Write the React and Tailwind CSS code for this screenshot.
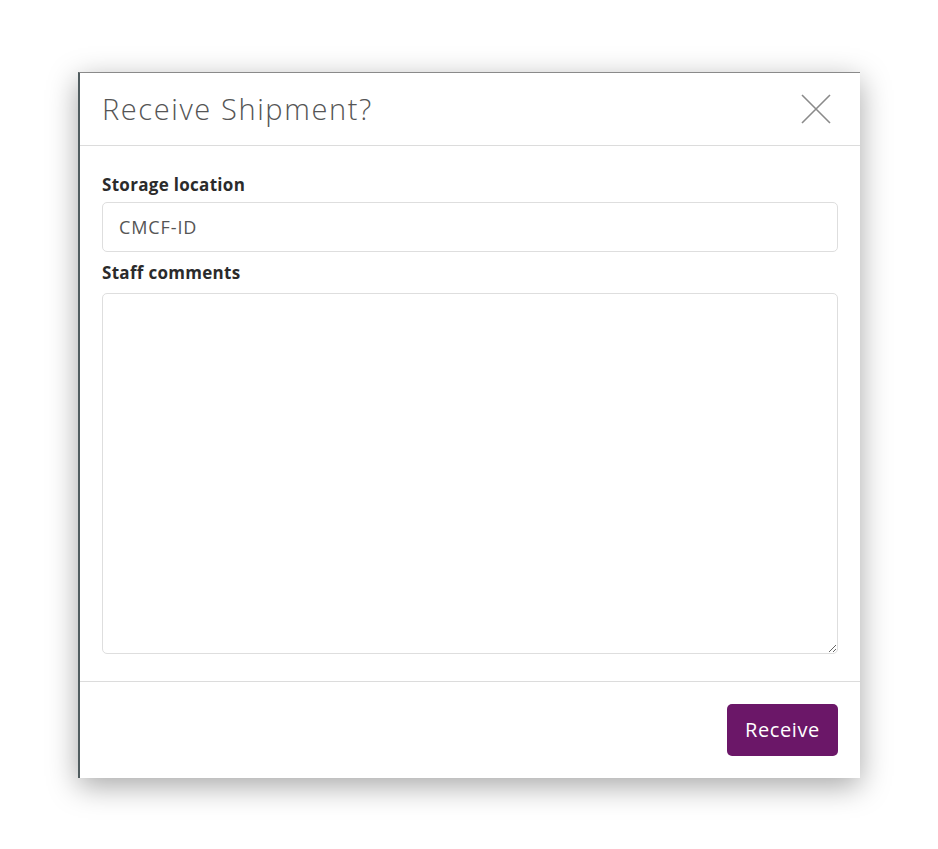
import React from "react";

const font = { fontFamily: '"Open Sans", "Noto Sans", sans-serif' };

const CloseIcon = () => (
  <svg width="32" height="32" viewBox="0 0 32 32" fill="none">
    <path d="M2 2L30 30M30 2L2 30" stroke="#8a8a8a" strokeWidth="1.6" />
  </svg>
);

const App = () => {
  return (
    <div className="bg-white min-h-screen pt-[72px] pl-[78px]" style={font}>
      <div className="w-[782px] bg-white border-l-2 border-l-[#505c5f] border-t border-t-[#8a8a8a] shadow-[0_8px_28px_rgba(0,0,0,0.35)]">
        {/* Header */}
        <div className="h-[73px] flex items-center justify-between pl-[22px] pr-[28px] border-b border-[#dcdcdc]">
          <h2 className="text-[29px] font-light text-[#555] tracking-[1.6px]">Receive Shipment?</h2>
          <button className="text-[#888]">
            <CloseIcon />
          </button>
        </div>

        {/* Body */}
        <div className="px-[22px] pt-[29px] pb-[27px]">
          <label className="block text-[17px] leading-[20px] font-bold text-[#2b2b2b] tracking-[0.3px] mb-[7px]">
            Storage location
          </label>
          <input
            defaultValue="CMCF-ID"
            className="w-full h-[50px] px-[16px] border border-[#dedede] rounded-[5px] text-[18px] tracking-[0.9px] text-[#555] outline-none"
          />
          <label className="block text-[17px] leading-[20px] font-bold text-[#2b2b2b] tracking-[0.3px] mt-[11px] mb-[10px]">
            Staff comments
          </label>
          <textarea className="block w-full h-[361px] px-[16px] py-[12px] border border-[#dedede] rounded-[5px] text-[17px] text-[#555] outline-none" />
        </div>

        {/* Footer */}
        <div className="h-[97px] border-t border-[#dcdcdc] flex items-center justify-end pr-[22px] pb-[1px]">
          <button className="w-[111px] h-[52px] rounded-[5px] bg-[#6b1768] text-white text-[20px] tracking-[0.6px]">
            Receive
          </button>
        </div>
      </div>
    </div>
  );
};

export default App;
